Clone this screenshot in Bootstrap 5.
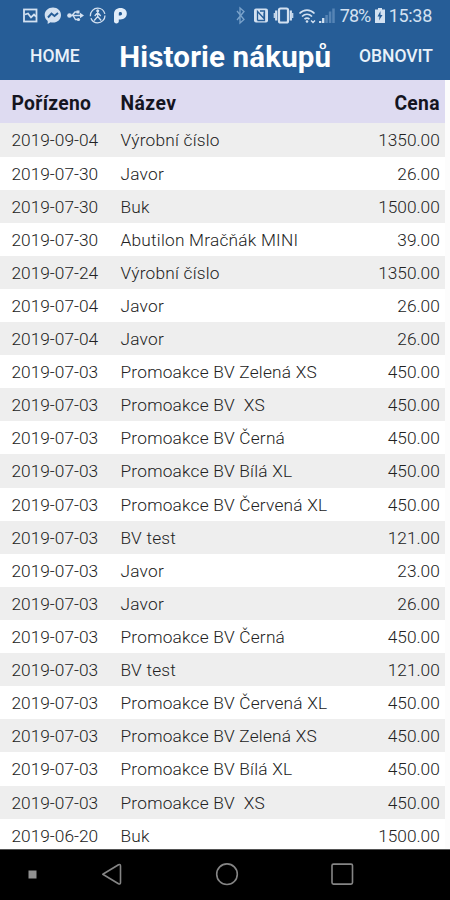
<!DOCTYPE html>
<html lang="cs">
<head>
<meta charset="utf-8">
<meta name="viewport" content="width=device-width, initial-scale=1">
<title>Historie nákupů</title>
<link href="https://cdn.jsdelivr.net/npm/bootstrap@5.3.0/dist/css/bootstrap.min.css" rel="stylesheet">
<style>
body{font-family:Roboto,"Liberation Sans",sans-serif;background:#fcfcfc;color:#222}
.screen{width:450px;height:900px}
.top-area{background:#265d97;height:80.3px;color:#fff}
.status{height:32px;padding-left:22px;padding-right:18px;color:#d3e1f1}
.status svg{display:block;flex:none}
.status-text{font-size:18px;line-height:32px;white-space:nowrap}
.pct{width:30px;margin-left:2px;letter-spacing:-.9px}
.clock{margin-left:3px;letter-spacing:-.3px}
.title-bar{height:48.3px;padding:0 17px 0 30px}
.action{font-size:17.5px;font-weight:500;color:#e9f1fa;line-height:48px}
.page-title{font-size:29.5px;font-weight:700;line-height:50px;white-space:nowrap;letter-spacing:.15px;padding-top:1px;margin-left:12px}
.history{width:445.3px}
.line{height:33.12px;padding:1px 5.5px 0 11.5px;font-size:17.3px;font-weight:300;line-height:33px;white-space:pre}
.line:nth-child(even){background:#eee}
.line:nth-child(odd){background:#fff}
.line.heading{background:#dedbf1;height:43.1px;padding-top:1.5px;line-height:43px;font-size:19.3px;letter-spacing:.3px;font-weight:700;color:#15151f}
.date-col{width:109px}
.name-col{letter-spacing:.22px}
.heading .name-col{letter-spacing:.45px}
.sys-nav{background:#000;height:51.5px;border-top:1px solid #555}
</style>
</head>
<body>
<div class="screen d-flex flex-column overflow-hidden">
  <header class="top-area flex-shrink-0">
    <div class="status d-flex align-items-center">
      <svg width="106" height="32" fill="none" stroke="#d3e1f1">
        <rect x="2" y="9.500" width="12.500" height="12" stroke-width="1.800"/>
        <path d="M3 14.500l3-1 3 4 3-3 2 2" stroke-width="1.800"/>
        <path d="M31 7.500c-4.800 0-8.300 3.200-8.300 7.500 0 2.600 1.200 4.600 3 5.900V24l2.800-1.700c.8.200 1.600.3 2.500.3 4.600 0 8-3.300 8-7.600s-3.400-7.500-8-7.500z" fill="#d3e1f1" stroke="none"/>
        <path d="M26 17.500l3.500-4 3 2.500 3.500-3" stroke="#265d97" stroke-width="1.900"/>
        <path d="M47 15.500h12M50 15.500l3-3.500h3M51 15.500l2.500 4H57" stroke-width="1.400"/>
        <circle cx="47.500" cy="15.500" r="2.300" fill="#d3e1f1" stroke="none"/>
        <path d="M58 12.700l4 2.800-4 2.800z" fill="#d3e1f1" stroke="none"/>
        <rect x="54.500" y="10.500" width="3" height="3" fill="#d3e1f1" stroke="none"/>
        <circle cx="56.500" cy="19.500" r="1.600" fill="#d3e1f1" stroke="none"/>
        <circle cx="75.700" cy="15.500" r="7.300" stroke-width="1.300" stroke-dasharray="20 2 22 2"/>
        <circle cx="75.700" cy="10.700" r="1.500" fill="#d3e1f1" stroke="none"/>
        <path d="M75.700 12v4.500l-3.500 4M75.700 16.500l3.500 4M75.700 12.500l-3 3.500M75.700 12.500l3 3.500" stroke-width="1.300"/>
        <path fill-rule="evenodd" d="M92 21.500V14c0-3.800 2.600-6 6.500-6 4 0 6.300 2.300 6.300 5.600 0 3.600-2.600 5.900-6.400 5.900h-1.600v2c0 1.100-1 1.900-2.400 1.900S92 22.600 92 21.500zM96.800 15.500h1.400c1.200 0 1.800-.7 1.800-1.700s-.6-1.700-1.700-1.700-1.500.6-1.500 1.700z" fill="#e2edf9" stroke="none"/>
      </svg>
      <svg class="ms-auto" width="102" height="32" fill="none" stroke="#d3e1f1">
        <path d="M1 11l7 8.500-4 3.500V8l4 3.500L1 20" stroke="#7ba3cb" stroke-width="1.300"/>
        <rect x="18" y="8.500" width="14" height="14" rx="2" fill="#d3e1f1" stroke="none"/>
        <path d="M21.500 20.500V11.500l6.500 7V12.500M24 11h4.500v9.500H21.500" stroke="#265d97" stroke-width="1.300"/>
        <rect x="43" y="8.500" width="9" height="14" rx="1.500" stroke-width="2.200"/>
        <path d="M40.200 10.500v10M54.800 10.500v10" stroke-width="2.200"/>
        <path d="M38.300 13v5M56.700 13v5" stroke-width="1.200"/>
        <path d="M63.500 13.500c4.500-4.600 10.500-4.600 15 0M66 16.500c3-2.900 7-2.900 10 0M68.500 19.200c1.500-1.300 3.500-1.300 5 0" stroke-width="1.700"/>
        <circle cx="71" cy="21.500" r="1.300" fill="#d3e1f1" stroke="none"/>
        <path d="M75 20.500l2 2 2-2" stroke-width="1.300"/>
        <path d="M84.200 23v-2M87.200 23v-5" stroke-width="2.300"/>
        <path d="M90.600 23v-8M94.100 23V11.500M97.500 23V8.500" stroke="#5684b5" stroke-width="2.500"/>
      </svg>
      <span class="status-text pct">78%</span>
      <svg width="12" height="32" class="ms-1">
        <path d="M4 8h4v1.500h3V23H1V9.500h3z" fill="#d3e1f1"/>
        <path d="M6.500 11L3.500 16.500h2L5 20.500l3.500-5.500h-2z" fill="#265d97"/>
      </svg>
      <span class="status-text clock">15:38</span>
    </div>
    <div class="title-bar d-flex justify-content-between align-items-center">
      <span class="action">HOME</span>
      <h1 class="page-title mb-0">Historie nákupů</h1>
      <span class="action">OBNOVIT</span>
    </div>
  </header>
  <main class="history flex-grow-1 overflow-hidden" id="history">
    <div class="line heading d-flex"><span class="date-col">Pořízeno</span><span class="name-col flex-grow-1">Název</span><span>Cena</span></div>
  </main>
  <nav class="sys-nav flex-shrink-0">
    <svg width="450" height="50" fill="none" stroke="#858585" stroke-width="1.600" stroke-linejoin="round">
      <rect x="28.500" y="20.500" width="8" height="8" fill="#929292" stroke="none"/>
      <path d="M102.800 24.300L118.500 14.700Q120.500 14 120.500 16V32.500Q120.500 34.500 118.500 33.700Z"/>
      <circle cx="227" cy="24.200" r="10.300"/>
      <rect x="332" y="14.100" width="20.500" height="20" rx="1.500"/>
    </svg>
  </nav>
</div>
<script>
const purchases = [
  ["2019-09-04","Výrobní číslo","1350.00"],
  ["2019-07-30","Javor","26.00"],
  ["2019-07-30","Buk","1500.00"],
  ["2019-07-30","Abutilon Mračňák MINI","39.00"],
  ["2019-07-24","Výrobní číslo","1350.00"],
  ["2019-07-04","Javor","26.00"],
  ["2019-07-04","Javor","26.00"],
  ["2019-07-03","Promoakce BV Zelená XS","450.00"],
  ["2019-07-03","Promoakce BV  XS","450.00"],
  ["2019-07-03","Promoakce BV Černá","450.00"],
  ["2019-07-03","Promoakce BV Bílá XL","450.00"],
  ["2019-07-03","Promoakce BV Červená XL","450.00"],
  ["2019-07-03","BV test","121.00"],
  ["2019-07-03","Javor","23.00"],
  ["2019-07-03","Javor","26.00"],
  ["2019-07-03","Promoakce BV Černá","450.00"],
  ["2019-07-03","BV test","121.00"],
  ["2019-07-03","Promoakce BV Červená XL","450.00"],
  ["2019-07-03","Promoakce BV Zelená XS","450.00"],
  ["2019-07-03","Promoakce BV Bílá XL","450.00"],
  ["2019-07-03","Promoakce BV  XS","450.00"],
  ["2019-06-20","Buk","1500.00"]
];
const list = document.getElementById("history");
for (const [date, name, price] of purchases) {
  list.insertAdjacentHTML("beforeend",
    `<div class="line d-flex"><span class="date-col">${date}</span><span class="name-col flex-grow-1">${name}</span><span>${price}</span></div>`);
}
</script>
<script src="https://cdn.jsdelivr.net/npm/bootstrap@5.3.0/dist/js/bootstrap.bundle.min.js"></script>
</body>
</html>
